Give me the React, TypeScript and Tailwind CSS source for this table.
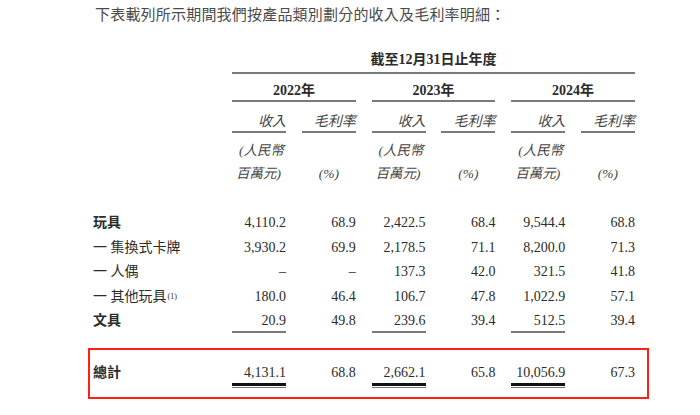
import React from 'react'

const serif = "font-['Liberation_Serif','Noto_Sans_CJK_TC',serif]"

interface Row {
  label: React.ReactNode
  bold?: boolean
  values: string[]
}

const rows: Row[] = [
  { label: '玩具', bold: true, values: ['4,110.2', '68.9', '2,422.5', '68.4', '9,544.4', '68.8'] },
  { label: '一 集換式卡牌', values: ['3,930.2', '69.9', '2,178.5', '71.1', '8,200.0', '71.3'] },
  { label: '一 人偶', values: ['–', '–', '137.3', '42.0', '321.5', '41.8'] },
  {
    label: (
      <>
        一 其他玩具<sup className="text-[8px] relative -top-[2px] ml-[1px]">(1)</sup>
      </>
    ),
    values: ['180.0', '46.4', '106.7', '47.8', '1,022.9', '57.1'],
  },
]

const years = ['2022年', '2023年', '2024年']

const Cells = ({ values, className }: { values: string[]; className?: string }) => (
  <div className="flex gap-x-[15.8px]">
    {values.map((v, i) => (
      <div key={i} className={`w-[54px] text-right ${className ?? ''}`}>
        {v}
      </div>
    ))}
  </div>
)

const Label = ({ children, bold }: { children: React.ReactNode; bold?: boolean }) => (
  <div className={`w-[139px] ${bold ? 'font-bold' : ''}`}>{children}</div>
)

export default function App() {
  return (
    <div className={`w-[700px] h-[415px] bg-white overflow-hidden text-[#2b2b2b] ${serif}`}>
      {/* intro line */}
      <p className="pl-[95px] pt-[4px] h-[24px] leading-[20px] text-[15px] tracking-[0.2px] text-[#4a4a4a] font-['Noto_Sans_CJK_TC',sans-serif]">
        下表載列所示期間我們按產品類別劃分的收入及毛利率明細：
      </p>

      {/* header */}
      <div className="ml-[232px] w-[403px]">
        <div className="mt-[26px] h-[20px] leading-[20px] text-[14px] font-bold text-center">截至12月31日止年度</div>
        <div className="mt-[2px] h-[2px] bg-[#7a7a7a]" />
        <div className="mt-[8px] flex gap-x-[15.8px]">
          {years.map((y) => (
            <div key={y} className="w-[123.8px]">
              <div className="h-[18px] leading-[18px] text-[14px] font-bold text-center">{y}</div>
              <div className="h-[2px] bg-[#7a7a7a]" />
            </div>
          ))}
        </div>
        <div className="mt-[11px] flex gap-x-[15.8px] text-[14px] italic text-[#444]">
          {years.map((y) => (
            <React.Fragment key={y}>
              <div className="w-[54px]">
                <div className="h-[18px] leading-[18px] text-right">收入</div>
                <div className="h-[2px] bg-[#7a7a7a]" />
              </div>
              <div className="w-[54px]">
                <div className="h-[18px] leading-[18px] text-right">毛利率</div>
                <div className="h-[2px] bg-[#7a7a7a]" />
              </div>
            </React.Fragment>
          ))}
        </div>
        <div className="mt-[6px] flex gap-x-[15.8px] text-[13.5px] italic text-[#444]">
          {years.map((y) => (
            <React.Fragment key={y}>
              <div className="w-[54px] leading-[23px]">
                <div className="pl-[7px]">(人民幣</div>
                <div className="pl-[4px]">百萬元)</div>
              </div>
              <div className="w-[54px] leading-[23px] text-center">
                <div>&nbsp;</div>
                <div>(%)</div>
              </div>
            </React.Fragment>
          ))}
        </div>
      </div>

      {/* data rows */}
      <div className="mt-[26px] ml-[93px] text-[14px]">
        {rows.map((r, i) => (
          <div key={i} className="flex h-[24.5px] leading-[24.5px]">
            <Label bold={r.bold}>{r.label}</Label>
            <Cells values={r.values} />
          </div>
        ))}
        <div className="flex h-[22px] leading-[24px]">
          <Label bold>文具</Label>
          <Cells values={['20.9', '49.8', '239.6', '39.4', '512.5', '39.4']} />
        </div>
        <div className="flex h-[2px]">
          <div className="w-[139px]" />
          <div className="flex gap-x-[15.8px]">
            {[true, false, true, false, true, false].map((on, i) => (
              <div key={i} className={`w-[54px] h-[2px] ${on ? 'bg-[#7a7a7a]' : ''}`} />
            ))}
          </div>
        </div>
      </div>

      {/* total */}
      <div className="mt-[15px] ml-[88px] w-[561px] h-[51px] border-2 border-[#ff1f17] pl-[3px] pt-[13px] text-[14px]">
        <div className="flex h-[20px] leading-[20px]">
          <Label bold>總計</Label>
          <Cells values={['4,131.1', '68.8', '2,662.1', '65.8', '10,056.9', '67.3']} />
        </div>
        <div className="flex">
          <div className="w-[139px]" />
          <div className="flex gap-x-[15.8px]">
            {[true, false, true, false, true, false].map((on, i) => (
              <div key={i} className="w-[54px]">
                {on && (
                  <>
                    <div className="h-[3px] bg-[#111]" />
                    <div className="mt-[1px] h-[1px] bg-[#777]" />
                  </>
                )}
              </div>
            ))}
          </div>
        </div>
      </div>
    </div>
  )
}
